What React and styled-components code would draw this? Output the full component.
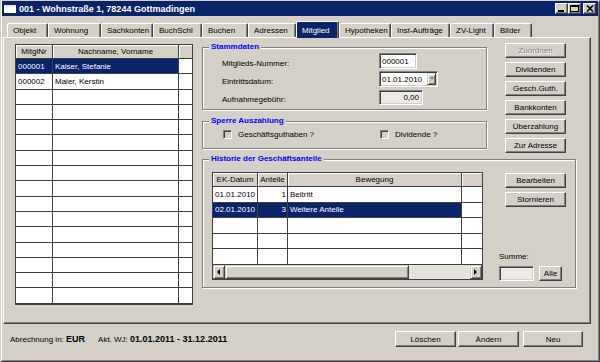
import React from "react";
import styled, { createGlobalStyle } from "styled-components";

const FACE = "#d4d0c8";
const NAVY = "#0a246a";
const LINE = "#404040";
const FONT = `"Liberation Sans", Arial, sans-serif`;

const GlobalStyle = createGlobalStyle`
  body {
    margin: 0;
    padding: 0;
    background: ${FACE};
    font-family: ${FONT};
    font-size: 8px;
    color: #000;
  }
  * { box-sizing: border-box; }
`;

const Window = styled.div`
  width: 600px;
  height: 362px;
  display: flex;
  flex-direction: column;
  background: ${FACE};
  border: 1px solid;
  border-color: ${FACE} ${LINE} ${LINE} ${FACE};
  box-shadow: inset 1px 1px #fff, inset -1px -1px #808080;
  padding: 0 2px 1px 2px;
  overflow: hidden;
`;

const TitleBar = styled.div`
  height: 15px;
  margin: 0 -1px;
  padding: 0 2px;
  background: ${NAVY};
  display: flex;
  align-items: center;
  color: #fff;
`;

const AppIcon = styled.span`
  width: 12px;
  height: 8px;
  background: #fff;
  border-top: 2px solid #e8e8e8;
`;

const TitleText = styled.span`
  margin-left: 3px;
  font-weight: bold;
  font-size: 9px;
  white-space: nowrap;
`;

const Controls = styled.div`
  margin-left: auto;
  display: flex;
`;

const CtrlButton = styled.div`
  width: 13px;
  height: 11px;
  margin-left: ${(p) => (p.$gap ? 2 : 0)}px;
  background: ${FACE};
  border: 1px solid;
  border-color: #fff ${LINE} ${LINE} #fff;
  box-shadow: inset -1px -1px #808080;
  display: flex;
  align-items: center;
  justify-content: center;
`;

const TabRow = styled.div`
  height: 16px;
  margin-top: 5px;
  padding-left: 4px;
  display: flex;
  align-items: flex-end;
`;

const Tab = styled.div`
  width: ${(p) => p.$w}px;
  height: ${(p) => (p.$active ? 17 : 14)}px;
  margin-bottom: ${(p) => (p.$active ? -1 : 0)}px;
  position: relative;
  z-index: ${(p) => (p.$active ? 1 : 0)};
  padding-left: 5px;
  display: flex;
  align-items: center;
  white-space: nowrap;
  background: ${(p) => (p.$active ? NAVY : FACE)};
  color: ${(p) => (p.$active ? "#fff" : "#000")};
  border-left: 1px solid #fff;
  border-top: 1px solid #fff;
  border-right: 1px solid ${LINE};
  box-shadow: inset -1px 0 #808080;
  border-radius: 2px 2px 0 0;
`;

const Panel = styled.div`
  height: 287px;
  margin-right: 6px;
  display: flex;
  align-items: flex-start;
  border: 1px solid;
  border-color: #fff ${LINE} ${LINE} #fff;
  box-shadow: inset -1px -1px #808080;
  padding: 4px 0 0 11px;
`;

const GridFrame = styled.div`
  width: ${(p) => p.$w}px;
  height: ${(p) => p.$h}px;
  margin-top: ${(p) => p.$mt || 0}px;
  flex: none;
  background: #fff;
  border: 1px solid ${LINE};
  overflow: hidden;
  display: flex;
  flex-direction: column;
`;

const GridRows = styled.div`
  flex: 1;
  overflow: hidden;
`;

const GridRow = styled.div`
  height: ${(p) => p.$h}px;
  display: flex;
  border-bottom: 1px solid ${LINE};
`;

const Cell = styled.div`
  flex: 0 0 ${(p) => p.$w}px;
  padding: 0 ${(p) => (p.$align === "right" ? 1 : 2)}px 0 2px;
  border-right: ${(p) => (p.$last ? "0" : `1px solid ${LINE}`)};
  display: flex;
  align-items: center;
  justify-content: ${(p) =>
    p.$align === "right" ? "flex-end" : p.$align === "center" ? "center" : "flex-start"};
  white-space: nowrap;
  overflow: hidden;
  background: ${(p) => (p.$head ? FACE : p.$sel ? NAVY : "#fff")};
  color: ${(p) => (p.$sel ? "#fff" : "#000")};
  box-shadow: ${(p) => (p.$head ? "inset 1px 1px #fff" : "none")};
`;

const RightArea = styled.div`
  width: 374px;
  margin-left: 9px;
  display: flex;
  flex-direction: column;
`;

const TopRow = styled.div`
  display: flex;
  align-items: flex-start;
`;

const GroupsCol = styled.div`
  width: 285px;
  display: flex;
  flex-direction: column;
`;

const Group = styled.fieldset`
  margin: ${(p) => p.$mt || 0}px 0 0 0;
  padding: ${(p) => p.$pad};
  min-width: 0;
  width: ${(p) => p.$w}px;
  border: 1px solid #808080;
  box-shadow: inset 1px 1px #fff, 1px 1px #fff;
`;

const Legend = styled.legend`
  margin-left: 6px;
  padding: 0 2px;
  font-weight: bold;
  font-size: 8px;
  line-height: 10px;
  color: #0000ff;
  background: ${FACE};
`;

const FieldGrid = styled.div`
  padding-left: 19px;
  display: grid;
  grid-template-columns: 157px auto;
  grid-auto-rows: 16px;
  row-gap: 2px;
  align-items: center;
`;

const FieldLabel = styled.span`
  margin-top: 4px;
  white-space: nowrap;
`;

const Input = styled.div`
  width: ${(p) => p.$w}px;
  height: ${(p) => p.$h || 16}px;
  padding: 0 ${(p) => (p.$right ? 3 : 1)}px 0 2px;
  display: flex;
  align-items: center;
  justify-content: ${(p) => (p.$right ? "flex-end" : "flex-start")};
  background: ${(p) => (p.$grey ? "#ecebe8" : "#fff")};
  border: 1px solid;
  border-color: #808080 #fff #fff #808080;
  box-shadow: inset 1px 1px ${LINE}, inset -1px -1px ${FACE};
  white-space: nowrap;
`;

const ComboButton = styled.div`
  margin-left: auto;
  width: 9px;
  height: 12px;
  background: ${FACE};
  border: 1px solid;
  border-color: ${FACE} ${LINE} ${LINE} ${FACE};
  box-shadow: inset 1px 1px #fff, inset -1px -1px #808080;
  display: flex;
  align-items: center;
  justify-content: center;
`;

const CheckRow = styled.div`
  height: 12px;
  padding-left: 20px;
  display: flex;
  align-items: center;
`;

const CheckItem = styled.label`
  width: ${(p) => (p.$w ? `${p.$w}px` : "auto")};
  display: flex;
  align-items: center;
  white-space: nowrap;
`;

const CheckBox = styled.span`
  width: 9px;
  height: 9px;
  margin-right: 6px;
  background: ${FACE};
  border: 1px solid;
  border-color: #808080 #fff #fff #808080;
  box-shadow: inset 1px 1px ${LINE};
`;

const ButtonCol = styled.div`
  margin: ${(p) => p.$mt || 0}px 0 0 ${(p) => p.$ml || 0}px;
  display: flex;
  flex-direction: column;
  align-items: flex-end;
  gap: 4px;
`;

const Button = styled.button`
  width: ${(p) => p.$w || 61}px;
  height: ${(p) => p.$h || 15}px;
  margin-left: ${(p) => p.$ml || 0}px;
  padding: 0;
  font: 8px ${FONT};
  color: ${(p) => (p.disabled ? "#808080" : "#000")};
  text-shadow: ${(p) => (p.disabled ? "1px 1px #fff" : "none")};
  background: ${FACE};
  border: 1px solid;
  border-color: #fff ${LINE} ${LINE} #fff;
  box-shadow: inset -1px -1px #808080;
  flex: none;
`;

const HistBody = styled.div`
  padding: 0 9px;
  display: flex;
  align-items: flex-start;
`;

const HistSide = styled.div`
  width: 67px;
  height: 108px;
  margin: 1px 0 0 16px;
  display: flex;
  flex-direction: column;
`;

const SumLabel = styled.span`
  margin-top: auto;
  margin-bottom: 4px;
  line-height: 10px;
`;

const SumRow = styled.div`
  display: flex;
  align-items: center;
`;

const Scrollbar = styled.div`
  height: 14px;
  flex: none;
  display: flex;
  background: #e6e3de;
`;

const ScrollPart = styled.div`
  width: ${(p) => p.$w}px;
  height: 14px;
  flex: none;
  background: ${FACE};
  border: 1px solid;
  border-color: ${FACE} ${LINE} ${LINE} ${FACE};
  box-shadow: inset 1px 1px #fff, inset -1px -1px #808080;
  display: flex;
  align-items: center;
  justify-content: center;
  margin-left: ${(p) => (p.$end ? "auto" : 0)};
`;

const Footer = styled.div`
  flex: 1;
  display: flex;
  align-items: flex-start;
  padding: 7px 14px 0 7px;
`;

const Status = styled.div`
  height: 16px;
  display: flex;
  align-items: center;
  white-space: nowrap;
  gap: 13px;
`;

const Strong = styled.b`
  font-size: 9px;
`;

const FooterButtons = styled.div`
  margin-left: auto;
  display: flex;
`;

const tabs = [
  ["Objekt", 41],
  ["Wohnung", 53],
  ["Sachkonten", 52],
  ["BuchSchl", 49],
  ["Buchen", 46],
  ["Adressen", 48],
  ["Mitglied", 43, true],
  ["Hypotheken", 52],
  ["Inst-Aufträge", 59],
  ["ZV-Light", 44],
  ["Bilder", 38],
];

const members = [
  { nr: "000001", name: "Kaiser, Stefanie", sel: true },
  { nr: "000002", name: "Maier, Kerstin" },
];

const history = [
  { d: "01.01.2010", a: "1", b: "Beitritt" },
  { d: "02.01.2010", a: "3", b: "Weitere Anteile", sel: true },
];

const Arrow = ({ dir, color = "#000" }) => {
  const pts = {
    left: "4,0 4,6 1,3",
    right: "1,0 1,6 4,3",
    down: "0,1 6,1 3,4",
  }[dir];
  return (
    <svg width="6" height="6" viewBox="0 0 6 6">
      <polygon points={pts} fill={color} />
    </svg>
  );
};

const MemberGrid = () => {
  const rows = [...members];
  while (rows.length < 17) rows.push({ nr: "", name: "" });
  return (
    <GridFrame $w={178} $h={261} $mt={2}>
      <GridRow $h={14}>
        <Cell $w={37} $head $align="center">MitglNr</Cell>
        <Cell $w={126} $head $align="center">Nachname, Vorname</Cell>
        <Cell $w={13} $head $last />
      </GridRow>
      <GridRows>
        {rows.map((r, i) => (
          <GridRow key={i} $h={15.3}>
            <Cell $w={37} $sel={r.sel}>{r.nr}</Cell>
            <Cell $w={126} $sel={r.sel}>{r.name}</Cell>
            <Cell $w={13} $last />
          </GridRow>
        ))}
      </GridRows>
    </GridFrame>
  );
};

const HistoryGrid = () => {
  const rows = [...history];
  while (rows.length < 6) rows.push({ d: "", a: "", b: "" });
  return (
    <GridFrame $w={271} $h={108}>
      <GridRow $h={14}>
        <Cell $w={45} $head $align="center">EK-Datum</Cell>
        <Cell $w={30} $head $align="center">Anteile</Cell>
        <Cell $w={174} $head $align="center">Bewegung</Cell>
        <Cell $w={20} $head $last />
      </GridRow>
      <GridRows>
        {rows.map((r, i) => (
          <GridRow key={i} $h={15.5}>
            <Cell $w={45} $sel={r.sel}>{r.d}</Cell>
            <Cell $w={30} $sel={r.sel} $align="right">{r.a}</Cell>
            <Cell $w={174} $sel={r.sel}>{r.b}</Cell>
            <Cell $w={20} $last />
          </GridRow>
        ))}
      </GridRows>
      <Scrollbar>
        <ScrollPart $w={12}>
          <Arrow dir="left" />
        </ScrollPart>
        <ScrollPart $w={184} />
        <ScrollPart $w={12} $end>
          <Arrow dir="right" />
        </ScrollPart>
      </Scrollbar>
    </GridFrame>
  );
};

const App = () => {
  return (
    <>
      <GlobalStyle />
      <Window>
        <TitleBar>
          <AppIcon />
          <TitleText>001 - Wohnstraße 1, 78244 Gottmadingen</TitleText>
          <Controls>
            <CtrlButton>
              <svg width="9" height="7" viewBox="0 0 9 7">
                <rect x="1" y="5" width="6" height="2" fill="#000" />
              </svg>
            </CtrlButton>
            <CtrlButton>
              <svg width="9" height="7" viewBox="0 0 9 7">
                <rect x="0.5" y="0.5" width="8" height="6" fill="none" stroke="#000" />
                <rect x="0" y="0" width="9" height="2" fill="#000" />
              </svg>
            </CtrlButton>
            <CtrlButton $gap>
              <svg width="8" height="7" viewBox="0 0 8 7">
                <path d="M1 0.5 L7 6.5 M7 0.5 L1 6.5" stroke="#000" strokeWidth="1.6" />
              </svg>
            </CtrlButton>
          </Controls>
        </TitleBar>

        <TabRow>
          {tabs.map(([label, w, active]) => (
            <Tab key={label} $w={w} $active={active}>
              {label}
            </Tab>
          ))}
        </TabRow>

        <Panel>
          <MemberGrid />
          <RightArea>
            <TopRow>
              <GroupsCol>
                <Group $w={285} $pad="1px 0 4px 0">
                  <Legend>Stammdaten</Legend>
                  <FieldGrid>
                    <FieldLabel>Mitglieds-Nummer:</FieldLabel>
                    <Input $w={38}>000001</Input>
                    <FieldLabel>Eintrittsdatum:</FieldLabel>
                    <Input $w={59}>
                      01.01.2010
                      <ComboButton>
                        <Arrow dir="down" color="#8a8a8a" />
                      </ComboButton>
                    </Input>
                    <FieldLabel>Aufnahmegebühr:</FieldLabel>
                    <Input $w={44} $h={15} $grey $right>
                      0,00
                    </Input>
                  </FieldGrid>
                </Group>
                <Group $w={285} $mt={6} $pad="2px 0 8px 0">
                  <Legend>Sperre Auszahlung</Legend>
                  <CheckRow>
                    <CheckItem $w={157}>
                      <CheckBox />
                      Geschäftsguthaben ?
                    </CheckItem>
                    <CheckItem>
                      <CheckBox />
                      Dividende ?
                    </CheckItem>
                  </CheckRow>
                </Group>
              </GroupsCol>
              <ButtonCol $ml={18} $mt={1}>
                <Button disabled>Zuordnen</Button>
                <Button>Dividenden</Button>
                <Button>Gesch.Guth.</Button>
                <Button>Bankkonten</Button>
                <Button>Überzahlung</Button>
                <Button>Zur Adresse</Button>
              </ButtonCol>
            </TopRow>

            <Group $w={374} $mt={1} $pad="8px 0 6px 0">
              <Legend>Historie der Geschäftsanteile</Legend>
              <HistBody>
                <HistoryGrid />
                <HistSide>
                  <ButtonCol>
                    <Button>Bearbeiten</Button>
                    <Button>Stornieren</Button>
                  </ButtonCol>
                  <SumLabel>Summe:</SumLabel>
                  <SumRow>
                    <Input $w={35} $h={15} $grey />
                    <Button $w={23} $h={15} $ml={5}>
                      Alle
                    </Button>
                  </SumRow>
                </HistSide>
              </HistBody>
            </Group>
          </RightArea>
        </Panel>

        <Footer>
          <Status>
            <span>
              Abrechnung in: <Strong>EUR</Strong>
            </span>
            <span>
              Akt. WJ: <Strong>01.01.2011 - 31.12.2011</Strong>
            </span>
          </Status>
          <FooterButtons>
            <Button $h={16}>Löschen</Button>
            <Button $h={16} $ml={2}>
              Ändern
            </Button>
            <Button $h={16} $w={60} $ml={4}>
              Neu
            </Button>
          </FooterButtons>
        </Footer>
      </Window>
    </>
  );
};

export default App;
